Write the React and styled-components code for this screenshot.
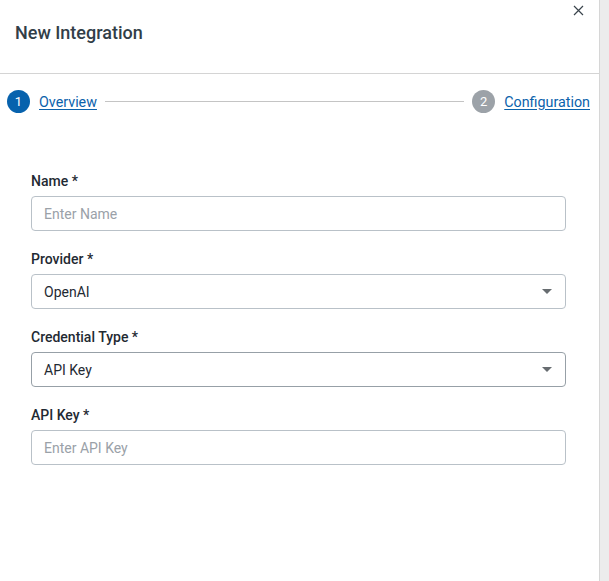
import styled, { createGlobalStyle } from "styled-components";

//STYLED COMPONENTS
//=======================================
const GlobalStyle = createGlobalStyle`
  * { box-sizing: border-box; }
  html, body {
    margin: 0;
    padding: 0;
    background: #ececec;
    font-family: Roboto, "Liberation Sans", Arial, sans-serif;
  }
`;

const Drawer = styled.aside`
  position: relative;
  width: 600px;
  height: 581px;
  background: #ffffff;
  border-right: 1px solid #d6d6d6;
  display: flex;
  flex-direction: column;
`;

const Header = styled.header`
  height: 74px;
  padding: 0 15px;
  display: flex;
  align-items: center;
  border-bottom: 1px solid #d4d4d4;
  padding-bottom: 8px;
`;

const Title = styled.h1`
  margin: 0;
  font-size: 18px;
  font-weight: 500;
  color: #323e48;
`;

const CloseButton = styled.button`
  position: absolute;
  top: 2px;
  right: 13px;
  width: 16px;
  height: 16px;
  padding: 0;
  border: none;
  background: none;
  display: flex;
  align-items: center;
  justify-content: center;
  cursor: pointer;
`;

const Stepper = styled.nav`
  display: flex;
  align-items: center;
  padding: 16px 9px 0 7px;
`;

const Step = styled.div`
  display: flex;
  align-items: center;
  gap: 9px;
`;

const StepNumber = styled.span`
  width: 23px;
  height: 23px;
  border-radius: 50%;
  background: ${(p) => (p.$active ? "#0762ad" : "#9ca2a8")};
  color: #ffffff;
  font-size: 13px;
  display: flex;
  align-items: center;
  justify-content: center;
`;

const StepLink = styled.a`
  font-size: 14.3px;
  color: #0b62ab;
  text-decoration: underline;
  text-underline-offset: 2px;
  cursor: pointer;
`;

const StepLine = styled.span`
  flex: 1;
  height: 1px;
  background: #c4c4c4;
  margin: 0 8px 0 8px;
`;

const Form = styled.form`
  padding: 60px 33px 0 31px;
  display: flex;
  flex-direction: column;
  gap: 20px;
`;

const Field = styled.div`
  display: flex;
  flex-direction: column;
  gap: 6px;
`;

const Label = styled.label`
  font-size: 14px;
  font-weight: 500;
  color: #1f2a33;
  line-height: 17px;
`;

const Input = styled.input`
  height: 35px;
  width: 100%;
  border: 1px solid #b9c1c8;
  border-radius: 4px;
  padding: 0 12px;
  font-family: inherit;
  font-size: 14px;
  color: #222;
  outline: none;
  &::placeholder {
    color: #9aa1a8;
  }
`;

const SelectBox = styled.div`
  height: 35px;
  width: 100%;
  border: ${(p) => (p.$focused ? "1.5px solid #97a0a7" : "1px solid #b9c1c8")};
  border-radius: 4px;
  padding: 0 12px;
  display: flex;
  align-items: center;
  justify-content: space-between;
  font-size: 14px;
  color: #1f2a33;
`;

const Caret = styled.span`
  width: 0;
  height: 0;
  border-left: 5px solid transparent;
  border-right: 5px solid transparent;
  border-top: 5px solid #676c70;
  margin-right: 1px;
`;
//=======================================

const App = () => {
  return (
    <>
      <GlobalStyle />
      <Drawer>
        <Header>
          <Title>New Integration</Title>
        </Header>
        <CloseButton aria-label="Close">
          <svg width="11" height="11" viewBox="0 0 11 11">
            <path d="M1 1L10 10M10 1L1 10" stroke="#3a444c" strokeWidth="1.2" />
          </svg>
        </CloseButton>
        <Stepper>
          <Step>
            <StepNumber $active>1</StepNumber>
            <StepLink>Overview</StepLink>
          </Step>
          <StepLine />
          <Step>
            <StepNumber>2</StepNumber>
            <StepLink>Configuration</StepLink>
          </Step>
        </Stepper>
        <Form>
          <Field>
            <Label>Name *</Label>
            <Input placeholder="Enter Name" />
          </Field>
          <Field>
            <Label>Provider *</Label>
            <SelectBox>
              OpenAI
              <Caret />
            </SelectBox>
          </Field>
          <Field>
            <Label>Credential Type *</Label>
            <SelectBox $focused>
              API Key
              <Caret />
            </SelectBox>
          </Field>
          <Field>
            <Label>API Key *</Label>
            <Input placeholder="Enter API Key" />
          </Field>
        </Form>
      </Drawer>
    </>
  );
};

export default App;
